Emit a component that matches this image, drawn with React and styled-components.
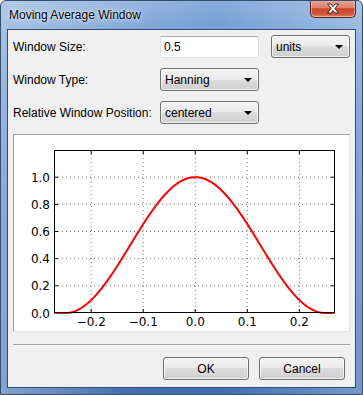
import React from 'react'
import styled, { createGlobalStyle } from 'styled-components'

const GlobalStyle = createGlobalStyle`
  html, body { margin: 0; padding: 0; background: #ffffff; }
  body { font-family: "Segoe UI", "Liberation Sans", Arial, sans-serif; font-size: 12px; color: #000; }
`

// plot scales (svg coords inside the chart frame)
const AX = { left: 40, right: 321, top: 15, bottom: 178 }
const XMIN = -0.2715
const XMAX = 0.2685
const YMAX = 1.2
const px = (x) => AX.left + ((x - XMIN) / (XMAX - XMIN)) * (AX.right - AX.left)
const py = (v) => AX.bottom - (v / YMAX) * (AX.bottom - AX.top)

const hann = (x) => (Math.abs(x) <= 0.25 ? 0.5 * (1 + Math.cos((Math.PI * x) / 0.25)) : 0)

const curve = () => {
  const pts = []
  const n = 240
  for (let i = 0; i <= n; i++) {
    const x = -0.264 + (0.528 * i) / n
    pts.push(`${px(x).toFixed(2)},${py(hann(x)).toFixed(2)}`)
  }
  return pts.join(' ')
}

const xTicks = [-0.2, -0.1, 0, 0.1, 0.2]
const yTicks = [0, 0.2, 0.4, 0.6, 0.8, 1.0]
const fmt = (v) => (v < 0 ? '\u2212' + Math.abs(v).toFixed(1) : v.toFixed(1))

const Chart = () => (
  <svg width="335" height="196" viewBox="0 0 335 196">
    <rect x={AX.left} y={AX.top} width={AX.right - AX.left} height={AX.bottom - AX.top} fill="#fff" />
    {xTicks.map((t) => (
      <line key={'gx' + t} x1={px(t)} x2={px(t)} y1={AX.top} y2={AX.bottom} stroke="#7a7a7a" strokeWidth="1" strokeDasharray="1 3" />
    ))}
    {yTicks.slice(1).map((t) => (
      <line key={'gy' + t} x1={AX.left} x2={AX.right} y1={py(t)} y2={py(t)} stroke="#7a7a7a" strokeWidth="1" strokeDasharray="1 3" />
    ))}
    {xTicks.map((t) => (
      <g key={'tx' + t} stroke="#000" strokeWidth="1">
        <line x1={px(t)} x2={px(t)} y1={AX.bottom} y2={AX.bottom - 4} />
        <line x1={px(t)} x2={px(t)} y1={AX.top} y2={AX.top + 4} />
      </g>
    ))}
    {yTicks.map((t) => (
      <g key={'ty' + t} stroke="#000" strokeWidth="1">
        <line x1={AX.left} x2={AX.left + 4} y1={py(t)} y2={py(t)} />
        <line x1={AX.right} x2={AX.right - 4} y1={py(t)} y2={py(t)} />
      </g>
    ))}
    <polyline points={curve()} fill="none" stroke="#ff0000" strokeWidth="2" strokeLinejoin="round" />
    <rect x={AX.left + 0.5} y={AX.top + 0.5} width={AX.right - AX.left - 1} height={AX.bottom - AX.top - 1} fill="none" stroke="#000" strokeWidth="1" />
    <g fontFamily='"DejaVu Sans", sans-serif' fontSize="12" fill="#000">
      {yTicks.map((t) => (
        <text key={'ly' + t} x={AX.left - 4} y={py(t) + 4.5} textAnchor="end">{fmt(t)}</text>
      ))}
      {xTicks.map((t) => (
        <text key={'lx' + t} x={px(t)} y={AX.bottom + 13} textAnchor="middle">{fmt(t)}</text>
      ))}
    </g>
  </svg>
)

const App = () => {
  return (
    <Window>
      <GlobalStyle />
      <TitleBar>
        <Title>Moving Average Window</Title>
        <CloseButton>
          <svg width="14" height="11" viewBox="0 0 14 11">
            <path d="M1.5 1 H5 L7 3.6 L9 1 H12.5 L8.8 5.5 L12.5 10 H9 L7 7.4 L5 10 H1.5 L5.2 5.5 Z" fill="#fff" stroke="#43261f" strokeWidth="1" strokeLinejoin="round" />
          </svg>
        </CloseButton>
      </TitleBar>
      <Client>
        <FormGrid>
          <Label>Window Size:</Label>
          <TextInput>0.5</TextInput>
          <Combo>units<Arrow /></Combo>
          <Label>Window Type:</Label>
          <Combo>Hanning<Arrow /></Combo>
          <Label>Relative Window Position:</Label>
          <Combo>centered<Arrow /></Combo>
        </FormGrid>
        <ChartFrame>
          <Chart />
        </ChartFrame>
        <Separator />
        <ButtonRow>
          <Button>OK</Button>
          <Button>Cancel</Button>
        </ButtonRow>
      </Client>
    </Window>
  )
}

export default App

const Window = styled.div`
  width: 363px;
  height: 395px;
  box-sizing: border-box;
  display: flex;
  flex-direction: column;
  border: 1px solid #33506f;
  border-radius: 6px 6px 0 0;
  padding: 0 6px 6px 6px;
  background:
    linear-gradient(to right, rgba(190, 210, 235, 0.55) 0%, rgba(100, 145, 205, 0.15) 35%, rgba(70, 120, 195, 0.3) 60%, rgba(170, 200, 235, 0.5) 100%),
    linear-gradient(to bottom, #a4c0e2 0%, #87acda 30px, #6590c8 110px, #4c78b5 220px, #3e69a8 100%);
  overflow: hidden;
`

const TitleBar = styled.div`
  height: 28px;
  display: flex;
  align-items: flex-start;
  justify-content: space-between;
`

const Title = styled.div`
  padding: 7px 0 0 2px;
  font-size: 12px;
  color: #000;
  text-shadow: 0 0 6px rgba(255, 255, 255, 0.9), 0 0 2px rgba(255, 255, 255, 0.8);
`

const CloseButton = styled.div`
  width: 46px;
  height: 18px;
  margin-top: -1px;
  box-sizing: border-box;
  display: flex;
  align-items: center;
  justify-content: center;
  border: 1px solid #5a2a22;
  border-top: none;
  border-radius: 0 0 5px 5px;
  background: linear-gradient(to bottom, #e9ab9c 0%, #d9806c 45%, #c7452f 52%, #d15a3f 85%, #e58a68 100%);
  box-shadow: inset 0 0 0 1px rgba(255, 220, 210, 0.45);
`

const Client = styled.div`
  flex: 1;
  display: flex;
  flex-direction: column;
  background: #f0f0f0;
  border: 1px solid #2f4d74;
  padding: 5px 5px 7px 5px;
`

const FormGrid = styled.div`
  display: grid;
  grid-template-columns: 135px 99px 79px;
  grid-template-rows: 23px 23px 23px;
  column-gap: 12px;
  row-gap: 10px;
  align-items: center;
`

const Label = styled.div`
  grid-column: 1;
  font-size: 12px;
  white-space: nowrap;
`

const TextInput = styled.div`
  height: 22px;
  box-sizing: border-box;
  display: flex;
  align-items: center;
  padding-left: 3px;
  background: #fff;
  border: 1px solid #dcdfe6;
  border-top-color: #abadb3;
  border-radius: 2px;
  font-size: 12px;
`

const Combo = styled.div`
  position: relative;
  height: 23px;
  box-sizing: border-box;
  display: flex;
  align-items: center;
  padding-left: 4px;
  border: 1px solid #707070;
  border-radius: 3px;
  background: linear-gradient(to bottom, #f2f2f2 0%, #ebebeb 50%, #dddddd 50%, #cfcfcf 100%);
  box-shadow: inset 0 0 0 1px rgba(255, 255, 255, 0.7);
  font-size: 12px;
`

const Arrow = styled.span`
  position: absolute;
  right: 6px;
  top: 9px;
  width: 0;
  height: 0;
  border-left: 4px solid transparent;
  border-right: 4px solid transparent;
  border-top: 4px solid #000;
`

const ChartFrame = styled.div`
  margin-top: 10px;
  height: 198px;
  box-sizing: border-box;
  background: #fff;
  border: 1px solid #a0a0a0;
  border-right-color: #e3e3e3;
  border-bottom-color: #e3e3e3;
  display: flex;
`

const Separator = styled.div`
  margin-top: 12px;
  height: 1px;
  background: #a0a0a0;
  border-bottom: 1px solid #ffffff;
`

const ButtonRow = styled.div`
  margin-top: 11px;
  display: flex;
  justify-content: flex-end;
  gap: 10px;
  padding-right: 5px;
`

const Button = styled.div`
  width: 86px;
  height: 23px;
  box-sizing: border-box;
  display: flex;
  align-items: center;
  justify-content: center;
  border: 1px solid #707070;
  border-radius: 3px;
  background: linear-gradient(to bottom, #f2f2f2 0%, #ebebeb 50%, #dddddd 50%, #cfcfcf 100%);
  box-shadow: inset 0 0 0 1px rgba(255, 255, 255, 0.7);
  font-size: 12px;
`
